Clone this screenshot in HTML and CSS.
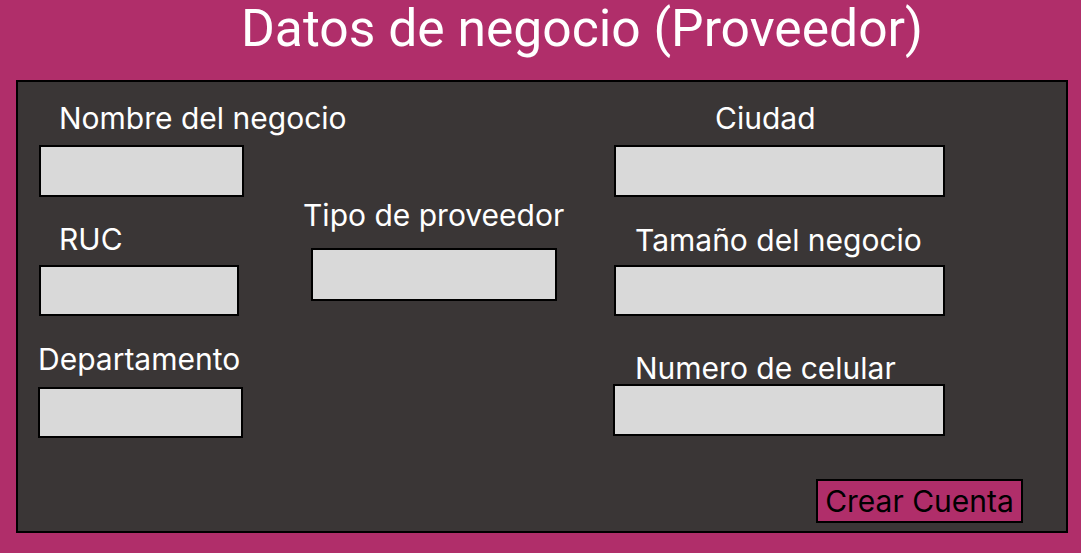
FILE: index.html
```html
<!DOCTYPE html>
<html lang="es">
<head>
<meta charset="utf-8">
<title>Datos de negocio (Proveedor)</title>
<link rel="stylesheet" href="styles.css">
</head>
<body>
<h1 class="title">Datos de negocio (Proveedor)</h1>
<main class="panel">
  <div class="col col-1">
    <div class="group g-nombre">
      <label class="label">Nombre del negocio</label>
      <div class="field f-nombre"></div>
    </div>
    <div class="group g-ruc">
      <label class="label">RUC</label>
      <div class="field f-ruc"></div>
    </div>
    <div class="group g-depto">
      <label class="label">Departamento</label>
      <div class="field f-depto"></div>
    </div>
  </div>
  <div class="col col-2">
    <div class="group g-tipo">
      <label class="label">Tipo de proveedor</label>
      <div class="field f-tipo"></div>
    </div>
  </div>
  <div class="col col-3">
    <div class="group g-ciudad">
      <label class="label">Ciudad</label>
      <div class="field f-wide"></div>
    </div>
    <div class="group g-tamano">
      <label class="label">Tamaño del negocio</label>
      <div class="field f-wide"></div>
    </div>
    <div class="group g-numero">
      <label class="label">Numero de celular</label>
      <div class="field f-numero"></div>
    </div>
    <button class="btn">Crear Cuenta</button>
  </div>
</main>
</body>
</html>
```

FILE: styles.css
```css
* { box-sizing: border-box; }

html, body {
  margin: 0;
  padding: 0;
  background: #b02e6a;
  height: 100%;
}

body {
  width: 1081px;
  height: 553px;
  overflow: hidden;
  font-family: Inter, "Noto Sans", sans-serif;
}

.title {
  margin: 0;
  height: 80px;
  padding: 0 0 0 241px;
  font-family: Roboto, "Noto Sans", sans-serif;
  font-weight: 400;
  font-size: 51.6px;
  line-height: 57px;
  color: #ffffff;
  white-space: nowrap;
}

.panel {
  margin-left: 16px;
  width: 1052px;
  height: 453px;
  background: #3a3636;
  border: 2px solid #000;
  display: flex;
  padding-left: 20px;
}

.col {
  display: flex;
  flex-direction: column;
  align-items: flex-start;
}

.col-1 { width: 265px; }
.col-2 { width: 310px; }
.col-3 { flex: 1; }

.group {
  display: flex;
  flex-direction: column;
  align-items: flex-start;
}

.label {
  display: block;
  color: #ffffff;
  font-size: 30px;
  line-height: 34px;
  white-space: nowrap;
}

.field {
  background: #d9d9d9;
  border: 2px solid #000;
  height: 52px;
}

/* column 1 */
.g-nombre { margin-top: 19px; }
.g-nombre .label { padding-left: 21px; }
.f-nombre { width: 205px; margin-left: 1px; margin-top: 10px; }

.g-ruc { margin-top: 25px; }
.g-ruc .label { padding-left: 21px; }
.f-ruc { width: 200px; height: 51px; margin-left: 1px; margin-top: 9px; }

.g-depto { margin-top: 26px; }
.g-depto .label { padding-left: 0; }
.f-depto { width: 205px; height: 51px; margin-top: 11px; }

/* column 2 */
.g-tipo { margin-top: 116px; }
.f-tipo { width: 246px; height: 53px; margin-left: 8px; margin-top: 16px; }

/* column 3 */
.g-ciudad { margin-top: 19px; }
.g-ciudad .label { padding-left: 102px; }
.f-wide { width: 331px; margin-left: 1px; margin-top: 10px; }
.g-tamano .label { padding-left: 22px; }
.g-tamano { margin-top: 26px; }
.g-tamano .f-wide { height: 51px; margin-top: 8px; }

.g-numero { margin-top: 35px; }
.g-numero .label { padding-left: 22px; }
.f-numero { width: 332px; margin-top: -1px; }

.btn {
  align-self: flex-end;
  margin-right: 43px;
  margin-top: 43px;
  width: 207px;
  height: 44px;
  padding: 0;
  background: #b02e6a;
  border: 2px solid #000;
  color: #000;
  font-family: Inter, "Noto Sans", sans-serif;
  font-size: 30px;
  line-height: 38px;
  text-align: center;
}
```
